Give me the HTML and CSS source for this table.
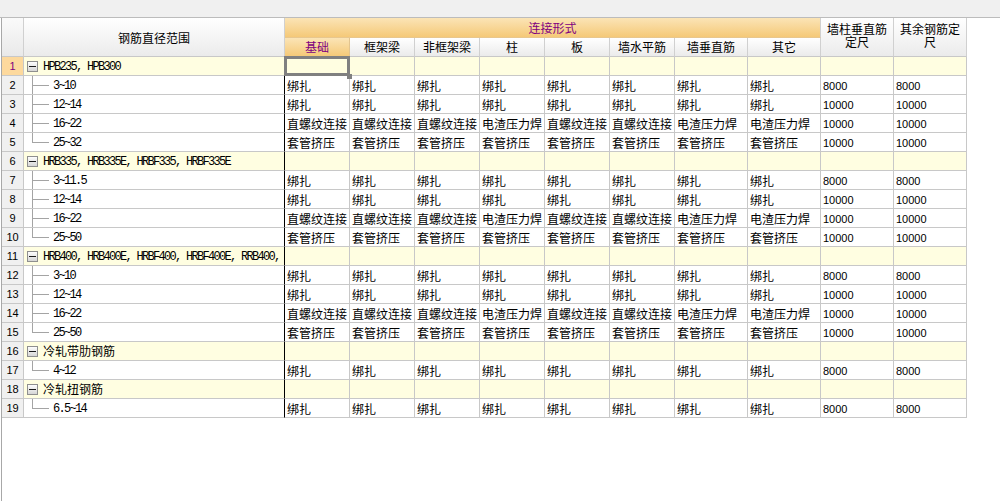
FILE: index.html
```html
<!DOCTYPE html>
<html lang="zh">
<head>
<meta charset="utf-8">
<title>钢筋连接形式设置</title>
<link rel="stylesheet" href="styles.css">
</head>
<body>
<div class="toolbar"></div>
<div class="sheet">
  <div class="grid head">
    <div class="hc h-num"></div>
    <div class="hc h-range">钢筋直径范围</div>
    <div class="hc h-group">连接形式</div>
    <div class="hc h-wall"><span>墙柱垂直筋</span><span>定尺</span></div>
    <div class="hc h-rest"><span>其余钢筋定</span><span>尺</span></div>
    <div class="hc sub active">基础</div>
    <div class="hc sub">框架梁</div>
    <div class="hc sub">非框架梁</div>
    <div class="hc sub">柱</div>
    <div class="hc sub">板</div>
    <div class="hc sub">墙水平筋</div>
    <div class="hc sub">墙垂直筋</div>
    <div class="hc sub">其它</div>
  </div>

  <div class="grid row group">
    <div class="num current">1</div>
    <div class="tree"><span class="toggle"></span><span class="code">HPB235, HPB300</span></div>
    <div class="c sel"></div><div class="c"></div><div class="c"></div><div class="c"></div><div class="c"></div><div class="c"></div><div class="c"></div><div class="c"></div><div class="c"></div><div class="c"></div>
  </div>
  <div class="grid row">
    <div class="num">2</div>
    <div class="tree"><span class="elbow"></span><span class="code">3~10</span></div>
    <div class="c">绑扎</div><div class="c">绑扎</div><div class="c">绑扎</div><div class="c">绑扎</div><div class="c">绑扎</div><div class="c">绑扎</div><div class="c">绑扎</div><div class="c">绑扎</div><div class="c n">8000</div><div class="c n">8000</div>
  </div>
  <div class="grid row">
    <div class="num">3</div>
    <div class="tree"><span class="elbow"></span><span class="code">12~14</span></div>
    <div class="c">绑扎</div><div class="c">绑扎</div><div class="c">绑扎</div><div class="c">绑扎</div><div class="c">绑扎</div><div class="c">绑扎</div><div class="c">绑扎</div><div class="c">绑扎</div><div class="c n">10000</div><div class="c n">10000</div>
  </div>
  <div class="grid row">
    <div class="num">4</div>
    <div class="tree"><span class="elbow"></span><span class="code">16~22</span></div>
    <div class="c">直螺纹连接</div><div class="c">直螺纹连接</div><div class="c">直螺纹连接</div><div class="c">电渣压力焊</div><div class="c">直螺纹连接</div><div class="c">直螺纹连接</div><div class="c">电渣压力焊</div><div class="c">电渣压力焊</div><div class="c n">10000</div><div class="c n">10000</div>
  </div>
  <div class="grid row">
    <div class="num">5</div>
    <div class="tree"><span class="elbow last"></span><span class="code">25~32</span></div>
    <div class="c">套管挤压</div><div class="c">套管挤压</div><div class="c">套管挤压</div><div class="c">套管挤压</div><div class="c">套管挤压</div><div class="c">套管挤压</div><div class="c">套管挤压</div><div class="c">套管挤压</div><div class="c n">10000</div><div class="c n">10000</div>
  </div>

  <div class="grid row group">
    <div class="num">6</div>
    <div class="tree"><span class="toggle"></span><span class="code">HRB335, HRB335E, HRBF335, HRBF335E</span></div>
    <div class="c"></div><div class="c"></div><div class="c"></div><div class="c"></div><div class="c"></div><div class="c"></div><div class="c"></div><div class="c"></div><div class="c"></div><div class="c"></div>
  </div>
  <div class="grid row">
    <div class="num">7</div>
    <div class="tree"><span class="elbow"></span><span class="code">3~11.5</span></div>
    <div class="c">绑扎</div><div class="c">绑扎</div><div class="c">绑扎</div><div class="c">绑扎</div><div class="c">绑扎</div><div class="c">绑扎</div><div class="c">绑扎</div><div class="c">绑扎</div><div class="c n">8000</div><div class="c n">8000</div>
  </div>
  <div class="grid row">
    <div class="num">8</div>
    <div class="tree"><span class="elbow"></span><span class="code">12~14</span></div>
    <div class="c">绑扎</div><div class="c">绑扎</div><div class="c">绑扎</div><div class="c">绑扎</div><div class="c">绑扎</div><div class="c">绑扎</div><div class="c">绑扎</div><div class="c">绑扎</div><div class="c n">10000</div><div class="c n">10000</div>
  </div>
  <div class="grid row">
    <div class="num">9</div>
    <div class="tree"><span class="elbow"></span><span class="code">16~22</span></div>
    <div class="c">直螺纹连接</div><div class="c">直螺纹连接</div><div class="c">直螺纹连接</div><div class="c">电渣压力焊</div><div class="c">直螺纹连接</div><div class="c">直螺纹连接</div><div class="c">电渣压力焊</div><div class="c">电渣压力焊</div><div class="c n">10000</div><div class="c n">10000</div>
  </div>
  <div class="grid row">
    <div class="num">10</div>
    <div class="tree"><span class="elbow last"></span><span class="code">25~50</span></div>
    <div class="c">套管挤压</div><div class="c">套管挤压</div><div class="c">套管挤压</div><div class="c">套管挤压</div><div class="c">套管挤压</div><div class="c">套管挤压</div><div class="c">套管挤压</div><div class="c">套管挤压</div><div class="c n">10000</div><div class="c n">10000</div>
  </div>

  <div class="grid row group">
    <div class="num">11</div>
    <div class="tree"><span class="toggle"></span><span class="code">HRB400, HRB400E, HRBF400, HRBF400E, RRB400,</span></div>
    <div class="c"></div><div class="c"></div><div class="c"></div><div class="c"></div><div class="c"></div><div class="c"></div><div class="c"></div><div class="c"></div><div class="c"></div><div class="c"></div>
  </div>
  <div class="grid row">
    <div class="num">12</div>
    <div class="tree"><span class="elbow"></span><span class="code">3~10</span></div>
    <div class="c">绑扎</div><div class="c">绑扎</div><div class="c">绑扎</div><div class="c">绑扎</div><div class="c">绑扎</div><div class="c">绑扎</div><div class="c">绑扎</div><div class="c">绑扎</div><div class="c n">8000</div><div class="c n">8000</div>
  </div>
  <div class="grid row">
    <div class="num">13</div>
    <div class="tree"><span class="elbow"></span><span class="code">12~14</span></div>
    <div class="c">绑扎</div><div class="c">绑扎</div><div class="c">绑扎</div><div class="c">绑扎</div><div class="c">绑扎</div><div class="c">绑扎</div><div class="c">绑扎</div><div class="c">绑扎</div><div class="c n">10000</div><div class="c n">10000</div>
  </div>
  <div class="grid row">
    <div class="num">14</div>
    <div class="tree"><span class="elbow"></span><span class="code">16~22</span></div>
    <div class="c">直螺纹连接</div><div class="c">直螺纹连接</div><div class="c">直螺纹连接</div><div class="c">电渣压力焊</div><div class="c">直螺纹连接</div><div class="c">直螺纹连接</div><div class="c">电渣压力焊</div><div class="c">电渣压力焊</div><div class="c n">10000</div><div class="c n">10000</div>
  </div>
  <div class="grid row">
    <div class="num">15</div>
    <div class="tree"><span class="elbow last"></span><span class="code">25~50</span></div>
    <div class="c">套管挤压</div><div class="c">套管挤压</div><div class="c">套管挤压</div><div class="c">套管挤压</div><div class="c">套管挤压</div><div class="c">套管挤压</div><div class="c">套管挤压</div><div class="c">套管挤压</div><div class="c n">10000</div><div class="c n">10000</div>
  </div>

  <div class="grid row group">
    <div class="num">16</div>
    <div class="tree"><span class="toggle"></span><span class="cn">冷轧带肋钢筋</span></div>
    <div class="c"></div><div class="c"></div><div class="c"></div><div class="c"></div><div class="c"></div><div class="c"></div><div class="c"></div><div class="c"></div><div class="c"></div><div class="c"></div>
  </div>
  <div class="grid row">
    <div class="num">17</div>
    <div class="tree"><span class="elbow last"></span><span class="code">4~12</span></div>
    <div class="c">绑扎</div><div class="c">绑扎</div><div class="c">绑扎</div><div class="c">绑扎</div><div class="c">绑扎</div><div class="c">绑扎</div><div class="c">绑扎</div><div class="c">绑扎</div><div class="c n">8000</div><div class="c n">8000</div>
  </div>

  <div class="grid row group">
    <div class="num">18</div>
    <div class="tree"><span class="toggle"></span><span class="cn">冷轧扭钢筋</span></div>
    <div class="c"></div><div class="c"></div><div class="c"></div><div class="c"></div><div class="c"></div><div class="c"></div><div class="c"></div><div class="c"></div><div class="c"></div><div class="c"></div>
  </div>
  <div class="grid row">
    <div class="num">19</div>
    <div class="tree"><span class="elbow last"></span><span class="code">6.5~14</span></div>
    <div class="c">绑扎</div><div class="c">绑扎</div><div class="c">绑扎</div><div class="c">绑扎</div><div class="c">绑扎</div><div class="c">绑扎</div><div class="c">绑扎</div><div class="c">绑扎</div><div class="c n">8000</div><div class="c n">8000</div>
  </div>
</div>
</body>
</html>
```

FILE: styles.css
```css
* { box-sizing: border-box; }

html, body {
  margin: 0;
  padding: 0;
  background: #fff;
}

body {
  font-family: "Noto Sans CJK SC", sans-serif;
  font-size: 12px;
  color: #000;
  overflow: hidden;
}

.toolbar {
  height: 18px;
  background: #f0f0f0;
  border-bottom: 1px solid #bcbcbc;
}

.sheet {
  margin-left: 1px;
  border-left: 1px solid #a8a8a8;
  min-height: calc(100vh - 18px);
}

.grid {
  display: grid;
  grid-template-columns: 22px 261px repeat(6, 65px) repeat(4, 73px);
  width: 965px;
}

/* header */
.head {
  grid-template-rows: 20px 19px;
}

.hc {
  display: flex;
  align-items: center;
  justify-content: center;
  text-align: center;
  line-height: 14px;
  border-right: 1px solid #d0d0d0;
  border-bottom: 1px solid #c8c8c8;
  background: linear-gradient(#ffffff, #ebebeb);
  white-space: nowrap;
}

.h-num { grid-row: 1 / 3; grid-column: 1; background: linear-gradient(#fafafa, #e9e9e9); }
.h-range { grid-row: 1 / 3; grid-column: 2; padding-top: 2px; }
.h-group {
  grid-row: 1;
  grid-column: 3 / 11;
  color: #800080;
  background: linear-gradient(#fbe4b6, #f5c978);
  border-bottom-color: #e8c78e;
}
.h-wall { grid-row: 1 / 3; grid-column: 11; }
.h-rest { grid-row: 1 / 3; grid-column: 12; }
.h-wall, .h-rest {
  flex-direction: column;
  line-height: 14px;
  padding-bottom: 5px;
}
.h-wall span, .h-rest span {
  display: block;
  height: 13px;
  overflow: visible;
}

.sub.active {
  color: #800080;
  background: linear-gradient(#fbe4b6, #f5c978);
  border-right-color: #e2c48f;
}

/* body rows */
.row {
  grid-template-rows: 19px;
}

.row > div {
  display: flex;
  align-items: center;
  border-right: 1px solid #c8c8c8;
  border-bottom: 1px solid #c8c8c8;
  white-space: nowrap;
  overflow: hidden;
}

.num {
  justify-content: center;
  background: #f0f0f0;
  font-family: "Liberation Sans", sans-serif;
  font-size: 11px;
}

.num.current {
  background: #fdd99d;
  color: #800080;
}

.row > .tree {
  border-right-color: #000;
  overflow: visible;
}

.c {
  padding-left: 2px;
  padding-top: 1px;
  line-height: 14px;
}

.c.n {
  font-family: "Liberation Sans", sans-serif;
  font-size: 11px;
  padding-top: 1px;
}

.group > div:not(.num) {
  background: #fffee1;
}

.group > .tree {
  background: linear-gradient(#a4a4a4, #a4a4a4) 8px 100% / 1px 50% no-repeat, #fffee1;
}

/* tree glyphs */
.toggle {
  flex: none;
  width: 11px;
  height: 11px;
  margin-left: 3px;
  margin-right: 5px;
  border: 1px solid #8f8f8f;
  background:
    linear-gradient(#1a1a1a, #1a1a1a) center / 7px 1px no-repeat,
    linear-gradient(#fdfdfd, #d6d6d6);
}

.elbow {
  flex: none;
  align-self: stretch;
  width: 17px;
  margin-left: 8px;
  margin-right: 4px;
  background:
    linear-gradient(#a4a4a4, #a4a4a4) 0 0 / 1px 100% no-repeat,
    linear-gradient(#a4a4a4, #a4a4a4) 0 50% / 100% 1px no-repeat;
}

.elbow.last {
  background:
    linear-gradient(#a4a4a4, #a4a4a4) 0 0 / 1px 50% no-repeat,
    linear-gradient(#a4a4a4, #a4a4a4) 0 50% / 100% 1px no-repeat;
}

.code {
  font-family: "Liberation Mono", monospace;
  font-size: 12px;
  letter-spacing: -1.7px;
  padding-top: 1px;
}

.cn {
  font-size: 12px;
  line-height: 14px;
}

/* selected cell */
.row > .sel {
  position: relative;
  overflow: visible;
  background: #e1efe6;
}

.sel::before {
  content: "";
  position: absolute;
  left: -1px;
  top: -1px;
  right: -1px;
  bottom: -1px;
  border: 3px solid #808080;
}

.sel::after {
  content: "";
  position: absolute;
  right: -3px;
  bottom: -4px;
  width: 5px;
  height: 5px;
  background: #808080;
}
```
